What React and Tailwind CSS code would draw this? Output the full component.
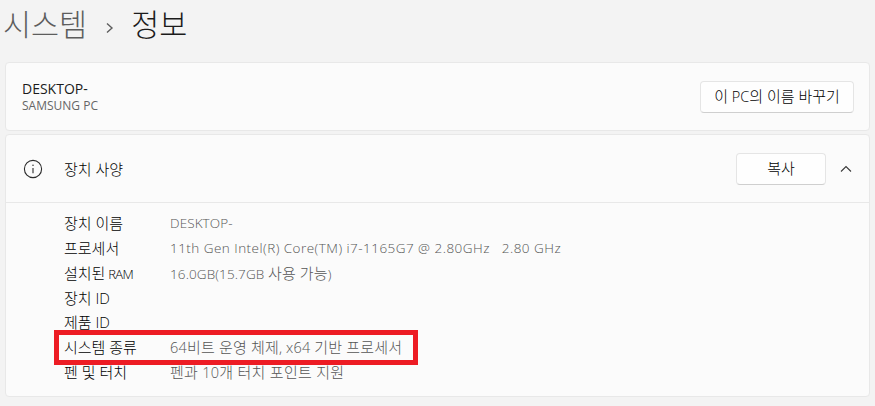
const F = { fontFamily: '"Open Sans", "Noto Sans CJK KR", sans-serif' };

const rows = [
  ["장치 이름", "DESKTOP-", "tracking-[0.1px]", ""],
  ["프로세서", "11th Gen Intel(R) Core(TM) i7-1165G7 @ 2.80GHz   2.80 GHz", "tracking-[0.47px]", ""],
  ["설치된 RAM", "16.0GB(15.7GB 사용 가능)", "tracking-[0.12px]", "text-[13px] tracking-[-0.6px]"],
  ["장치 ID", "", "", "text-[15px]"],
  ["제품 ID", "", "", "text-[15px]"],
  ["시스템 종류", "64비트 운영 체제, x64 기반 프로세서", "text-[14.5px] tracking-[0.17px]", ""],
  ["펜 및 터치", "펜과 10개 터치 포인트 지원", "text-[14.5px] tracking-[0.27px]", ""],
];

function T({ children, latin = "" }) {
  const parts = children.split(/([가-힣]+(?: [가-힣]+)*)/);
  return parts.map((p, i) =>
    /[가-힣]/.test(p) ? (
      <span key={i} className="text-[15px] font-light">{p}</span>
    ) : (
      <span key={i} className={`font-light ${latin}`}>{p}</span>
    )
  );
}

function Btn({ className, children }) {
  return (
    <div className={`flex items-center justify-center rounded-[4px] border border-[#e5e5e5] border-b-[#cfcfcf] bg-[#fefefe] text-[14.5px] text-[#000000] ${className}`}>
      {children}
    </div>
  );
}

export default function App() {
  return (
    <div style={F} className="relative h-[406px] w-[875px] overflow-hidden bg-[#f3f3f3] px-[5px]">
      <div className="flex h-[62px] items-start pt-[2px] text-[30.5px] leading-[44px] font-light">
        <span className="-ml-[2px] text-[#5d5d5d]">시스템</span>
        <svg width="10" height="12" viewBox="0 0 10 12" className="ml-[18px] mr-[16px] mt-[20px]" fill="none" stroke="#5d5d5d" strokeWidth="1.4">
          <path d="M2 1.5 L7 6 L2 10.5" />
        </svg>
        <span className="text-[#1b1b1b]">정보</span>
      </div>

      <div className="flex h-[69px] items-center justify-between rounded-[4px] border border-[#e8e8e8] bg-[#fbfbfb] pl-[16px] pr-[15px]">
        <div>
          <div className="text-[14px] leading-[18px] text-[#1b1b1b]">DESKTOP-</div>
          <div className="text-[12px] leading-[15px] text-[#666666]">SAMSUNG PC</div>
        </div>
        <Btn className="h-[32px] w-[154px]"><span><T>이 PC의 이름 바꾸기</T></span></Btn>
      </div>

      <div className="mt-[3px] h-[263px] rounded-[4px] border border-[#e8e8e8] bg-[#fbfbfb]">
        <div className="flex h-[68px] items-center border-b border-[#e8e8e8] pl-[17px] pr-[15px]">
          <svg width="20" height="20" viewBox="0 0 20 20" fill="none" stroke="#2b2b2b" strokeWidth="1.1">
            <circle cx="10" cy="10" r="8.6" />
            <path d="M10 9v5.2" />
            <circle cx="10" cy="6.3" r="0.75" fill="#2b2b2b" stroke="none" />
          </svg>
          <span className="ml-[21px] pt-[1px] text-[13.5px] text-[#000000]"><T>장치 사양</T></span>
          <Btn className="ml-auto h-[32px] w-[90px]"><span><T>복사</T></span></Btn>
          <svg width="12" height="8" viewBox="0 0 12 8" className="ml-[14px] mr-[2px]" fill="none" stroke="#3a3a3a" strokeWidth="1.1">
            <path d="M1 6.5 L6 1.5 L11 6.5" />
          </svg>
        </div>
        <div className="pl-[58px] pt-[8px]">
          {rows.map(([k, v, c, l]) => (
            <div key={k} className="flex h-[24.8px] items-center text-[13.5px]">
              <span className="w-[106px] shrink-0 text-[#000000]"><T latin={l}>{k}</T></span>
              <span className={`whitespace-pre text-[#555555] ${c}`}><T>{v}</T></span>
            </div>
          ))}
        </div>
      </div>

      <div className="absolute left-[54px] top-[330px] h-[35px] w-[364px] border-[5px] border-[#ed1c24]" />
    </div>
  );
}
